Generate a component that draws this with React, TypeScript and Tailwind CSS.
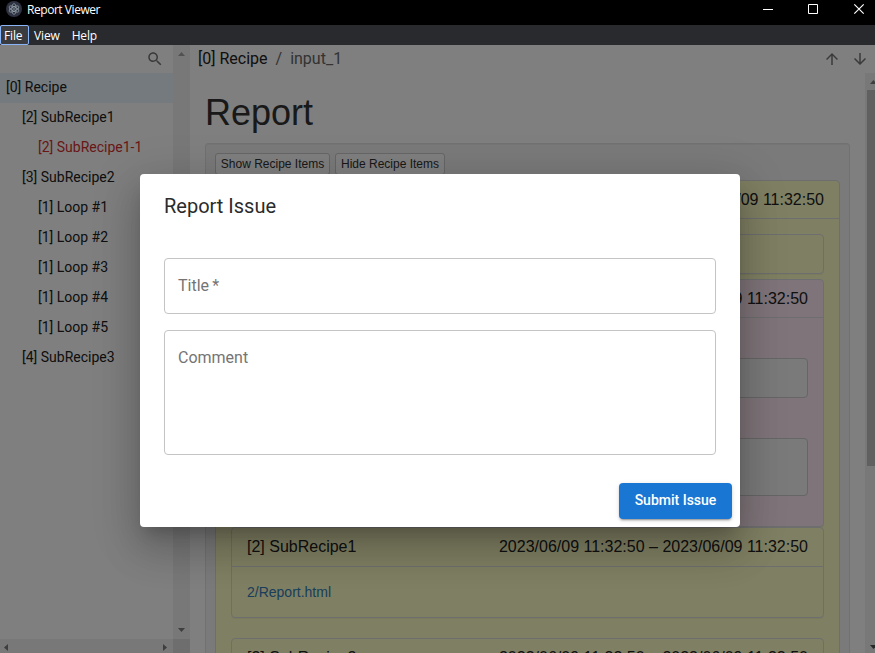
import React from "react";

type Entry = { label: string; indent: string; tone: string };

const entries: Entry[] = [
  { label: "[0] Recipe", indent: "pl-1.5 bg-[#ebf5fc]", tone: "text-[#212121]" },
  { label: "[2] SubRecipe1", indent: "pl-[22px]", tone: "text-[#212121]" },
  { label: "[2] SubRecipe1-1", indent: "pl-[38px]", tone: "text-[#d32f2f]" },
  { label: "[3] SubRecipe2", indent: "pl-[22px]", tone: "text-[#212121]" },
  { label: "[1] Loop #1", indent: "pl-[38px]", tone: "text-[#212121]" },
  { label: "[1] Loop #2", indent: "pl-[38px]", tone: "text-[#212121]" },
  { label: "[1] Loop #3", indent: "pl-[38px]", tone: "text-[#212121]" },
  { label: "[1] Loop #4", indent: "pl-[38px]", tone: "text-[#212121]" },
  { label: "[1] Loop #5", indent: "pl-[38px]", tone: "text-[#212121]" },
  { label: "[4] SubRecipe3", indent: "pl-[22px]", tone: "text-[#212121]" },
];

function TitleBar() {
  return (
    <div className="flex h-[25px] shrink-0 items-start bg-black text-white">
      <svg className="mt-[1px] ml-[6px] h-4 w-4" viewBox="0 0 16 16">
        <circle cx="8" cy="8" r="8" fill="#2f3241" />
        <g fill="none" stroke="#b4c6cc" strokeOpacity="0.75" strokeWidth="0.7">
          <ellipse cx="8" cy="8" rx="5.4" ry="2.1" transform="rotate(25 8 8)" />
          <ellipse cx="8" cy="8" rx="5.4" ry="2.1" transform="rotate(90 8 8)" />
          <ellipse cx="8" cy="8" rx="5.4" ry="2.1" transform="rotate(155 8 8)" />
        </g>
        <circle cx="8" cy="8" r="0.7" fill="#b4c6cc" />
      </svg>
      <span className="ml-[5px] grow pt-px font-['Open_Sans',sans-serif] text-[12px] leading-[18px] tracking-[-0.45px]">Report Viewer</span>
      <svg className="h-[19px] w-[120px]" viewBox="0 0 120 19" fill="none" stroke="#fff">
        <path d="M8 9.5h10" />
        <path d="M53.5 4.5h9v9h-9z" />
        <path d="M99.3 4.3l9.4 9.4M108.7 4.3l-9.4 9.4" strokeWidth="1.2" />
      </svg>
    </div>
  );
}

function MenuBar() {
  return (
    <div className="flex h-5 shrink-0 bg-[#292a2e] font-['Open_Sans',sans-serif] text-[12px] leading-[20px] tracking-[-0.15px] text-white">
      <div className="flex h-5 w-[29px] items-center rounded-[2px] border border-[#8ab4f8] bg-[#3a3b3f] pt-[2px] pl-[3px] leading-[18px]">File</div>
      <div className="ml-[5px] pt-px">View</div>
      <div className="ml-3 pt-px">Help</div>
    </div>
  );
}

function Sidebar() {
  return (
    <div className="flex w-[190px] shrink-0 flex-col">
      <div className="flex min-h-0 grow">
        <div className="w-[173px]">
          <div className="flex h-7 justify-end pt-[5px] pr-[9px]">
            <svg className="h-[18px] w-[18px]" viewBox="0 0 24 24" fill="#757575">
              <path d="M15.5 14h-.79l-.28-.27C15.41 12.59 16 11.11 16 9.5 16 5.91 13.09 3 9.5 3S3 5.91 3 9.5 5.91 16 9.5 16c1.61 0 3.09-.59 4.23-1.57l.27.28v.79l5 4.99L20.49 19l-4.99-5zm-6 0C7.01 14 5 11.99 5 9.5S7.01 5 9.5 5 14 7.01 14 9.5 11.99 14 9.5 14z" />
            </svg>
          </div>
          {entries.map((e) => (
            <div key={e.label} className={`h-[30px] text-[14px] leading-[29px] ${e.indent} ${e.tone}`}>
              {e.label}
            </div>
          ))}
        </div>
        <div className="flex w-[17px] flex-col items-center justify-between bg-[#f1f1f1] py-[7px]">
          <svg className="h-1 w-[7px]" viewBox="0 0 7 4" fill="#a3a3a3"><path d="M0 4L3.5 0 7 4z" /></svg>
          <svg className="h-1 w-[7px]" viewBox="0 0 7 4" fill="#7c7c7c"><path d="M0 0L3.5 4 7 0z" /></svg>
        </div>
      </div>
      <div className="flex h-[14px] shrink-0">
        <div className="flex w-[173px] items-start justify-between bg-[#f1f1f1] px-1 pt-[5px]">
          <svg className="h-[7px] w-1" viewBox="0 0 4 7" fill="#7c7c7c"><path d="M4 0L0 3.5 4 7z" /></svg>
          <svg className="mr-[2px] h-[7px] w-1" viewBox="0 0 4 7" fill="#7c7c7c"><path d="M0 0l4 3.5L0 7z" /></svg>
        </div>
        <div className="w-[17px] bg-[#dcdcdc]" />
      </div>
    </div>
  );
}

function Heading({ title, height = "h-[38px]" }: { title?: string; height?: string }) {
  return (
    <div className={`flex shrink-0 items-center border-b border-[#ddd] px-[15px] text-[16px] text-[#222] ${height}`}>
      {title && <span>{title}</span>}
      <span className="ml-auto">2023/06/09 11:32:50 – 2023/06/09 11:32:50</span>
    </div>
  );
}

const panel = "rounded-[4px] border border-[#ddd] shadow-[0_1px_1px_rgba(0,0,0,0.05)]";
const small = "h-[22px] rounded-[3px] border border-[#ccc] bg-white text-center text-[12px] leading-[20px] text-[#333]";

function Report() {
  return (
    <div className="flex min-h-0 grow font-['Liberation_Sans',Arial,sans-serif] text-[#333]">
      <div className="w-[675px] overflow-hidden pr-[15px] pl-[15px]">
        <h1 className="mt-5 mb-[10px] h-10 text-[36px] leading-[40px]">Report</h1>
        <div className="h-[700px] rounded-[3px] border border-[#e3e3e3] bg-[#f5f5f5] p-[9px] shadow-[inset_0_1px_1px_rgba(0,0,0,0.05)]">
          <div className="mb-[5px] flex gap-[5px]">
            <div className={`w-[115px] ${small}`}>Show Recipe Items</div>
            <div className={`w-[110px] ${small}`}>Hide Recipe Items</div>
          </div>
          <div className={`flex h-[650px] flex-col bg-[#ffffc6] ${panel}`}>
            <Heading />
            <div className="flex flex-col p-[15px]">
              <div className={`mb-[5px] h-10 ${panel}`} />
              <div className={`h-[248px] bg-[#fce8f2] ${panel}`}>
                <Heading />
                <div className="flex flex-col px-[15px] pt-10">
                  <div className="h-10 rounded-[4px] border border-[#ccc] bg-[#f5f5f5]" />
                  <div className="mt-10 h-[58px] rounded-[4px] border border-[#ccc] bg-[#f5f5f5]" />
                </div>
              </div>
              <div className={`mb-5 h-[91px] ${panel}`}>
                <Heading title="[2] SubRecipe1" height="h-[39px]" />
                <div className="p-[15px] text-[14px] leading-[20px] text-[#337ab7]">2/Report.html</div>
              </div>
              <div className={`h-[91px] ${panel}`}>
                <Heading title="[3] SubRecipe2" height="h-[39px]" />
              </div>
            </div>
          </div>
        </div>
      </div>
      <div className="flex w-[10px] flex-col overflow-hidden bg-[#f1f1f1]">
        <svg className="mt-[7px] ml-[5px] h-1 w-[7px] shrink-0" viewBox="0 0 7 4" fill="#7c7c7c"><path d="M0 4L3.5 0 7 4z" /></svg>
        <div className="mt-[6px] ml-[2px] h-[376px] bg-[#c1c1c1]" />
        <svg className="mt-auto mb-1 ml-[5px] h-1 w-[7px] shrink-0" viewBox="0 0 7 4" fill="#505050"><path d="M0 0L3.5 4 7 0z" /></svg>
      </div>
    </div>
  );
}

function Main() {
  return (
    <div className="flex min-w-0 grow flex-col">
      <div className="flex h-7 shrink-0 items-center pl-2 text-[16px] text-[#666]">
        <span className="text-[#212121]">[0] Recipe</span>
        <span className="mx-2">/</span>
        <span>input_1</span>
        <div className="ml-auto flex gap-[10px] pr-[6px]">
          <svg className="h-[18px] w-[18px]" viewBox="0 0 24 24" fill="#757575"><path d="m4 12 1.41 1.41L11 7.83V20h2V7.83l5.58 5.59L20 12l-8-8-8 8z" /></svg>
          <svg className="h-[18px] w-[18px]" viewBox="0 0 24 24" fill="#757575"><path d="m20 12-1.41-1.41L13 16.17V4h-2v12.17l-5.58-5.59L4 12l8 8 8-8z" /></svg>
        </div>
      </div>
      <Report />
    </div>
  );
}

function IssueDialog() {
  return (
    <div className="absolute inset-0 bg-black/50">
      <div className="absolute top-[129px] left-[140px] flex h-[353px] w-[600px] flex-col rounded-[4px] bg-white shadow-[0_11px_15px_-7px_rgba(0,0,0,0.2),0_24px_38px_3px_rgba(0,0,0,0.14),0_9px_46px_8px_rgba(0,0,0,0.12)]">
        <h2 className="px-6 py-4 text-[20px] leading-[32px] text-[#2b2b2b]">Report Issue</h2>
        <div className="mx-6 mt-5 h-14 rounded-[4px] border border-[#c4c4c4] px-[13px] pt-[15px] text-[16px] leading-[23px] text-[#747474]">Title&#8201;*</div>
        <div className="mx-6 mt-4 h-[125px] rounded-[4px] border border-[#c4c4c4] px-[13px] pt-[15px] text-[16px] leading-[23px] text-[#747474]">Comment</div>
        <div className="mt-auto flex justify-end p-2">
          <button className="h-9 w-[113px] rounded-[4px] bg-[#1976d2] pb-[2px] text-[14px] font-medium text-white shadow-[0_3px_1px_-2px_rgba(0,0,0,0.2),0_2px_2px_0_rgba(0,0,0,0.14),0_1px_5px_0_rgba(0,0,0,0.12)]">Submit Issue</button>
        </div>
      </div>
    </div>
  );
}

export default function App() {
  return (
    <div className="flex h-[653px] w-[875px] flex-col overflow-hidden bg-white font-['Roboto',sans-serif]">
      <TitleBar />
      <MenuBar />
      <div className="relative flex min-h-0 grow overflow-hidden">
        <Sidebar />
        <Main />
        <IssueDialog />
      </div>
    </div>
  );
}
